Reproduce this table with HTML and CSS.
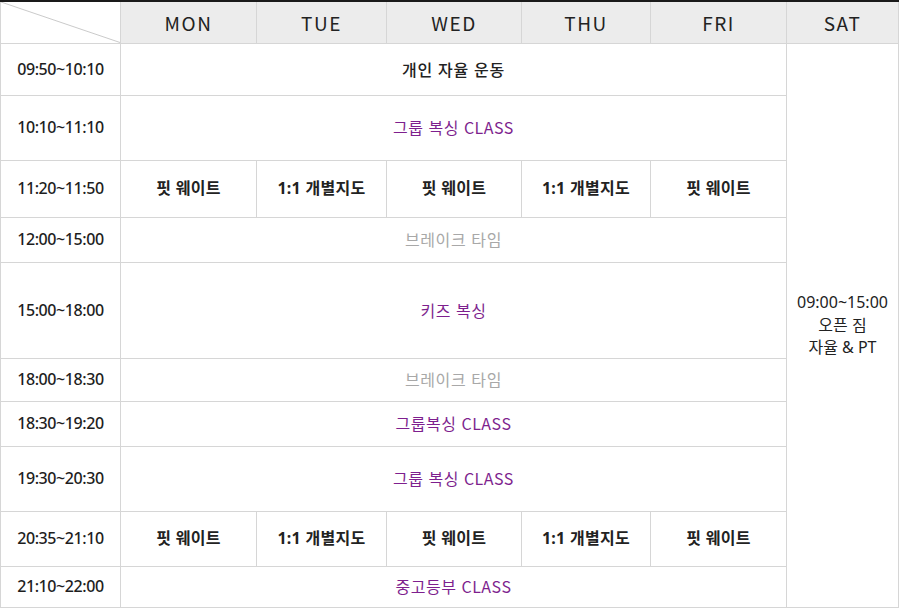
FILE: index.html
```html
<!DOCTYPE html>
<html lang="ko">
<head>
<meta charset="utf-8">
<link rel="stylesheet" href="styles.css">
</head>
<body>
<table class="schedule">
  <colgroup>
    <col class="c-time">
    <col class="c-mon">
    <col class="c-tue">
    <col class="c-wed">
    <col class="c-thu">
    <col class="c-fri">
    <col class="c-sat">
  </colgroup>
  <thead>
    <tr class="r-head">
      <th class="corner">
        <svg class="diag" viewBox="0 0 120 43" preserveAspectRatio="none"><line x1="0" y1="0" x2="120" y2="43" stroke="#c8c8c8" stroke-width="1"/></svg>
      </th>
      <th>MON</th>
      <th>TUE</th>
      <th>WED</th>
      <th>THU</th>
      <th>FRI</th>
      <th>SAT</th>
    </tr>
  </thead>
  <tbody>
    <tr class="r1">
      <td class="time">09:50~10:10</td>
      <td colspan="5" class="plain">개인 자율 운동</td>
      <td rowspan="10" class="sat">09:00~15:00<br>오픈 짐<br>자율 &amp; PT</td>
    </tr>
    <tr class="r2">
      <td class="time">10:10~11:10</td>
      <td colspan="5" class="purple">그룹 복싱 CLASS</td>
    </tr>
    <tr class="r3">
      <td class="time">11:20~11:50</td>
      <td class="bold">핏 웨이트</td>
      <td class="bold">1:1 개별지도</td>
      <td class="bold">핏 웨이트</td>
      <td class="bold">1:1 개별지도</td>
      <td class="bold">핏 웨이트</td>
    </tr>
    <tr class="r4">
      <td class="time">12:00~15:00</td>
      <td colspan="5" class="grey">브레이크 타임</td>
    </tr>
    <tr class="r5">
      <td class="time">15:00~18:00</td>
      <td colspan="5" class="purple">키즈 복싱</td>
    </tr>
    <tr class="r6">
      <td class="time">18:00~18:30</td>
      <td colspan="5" class="grey">브레이크 타임</td>
    </tr>
    <tr class="r7">
      <td class="time">18:30~19:20</td>
      <td colspan="5" class="purple">그룹복싱 CLASS</td>
    </tr>
    <tr class="r8">
      <td class="time">19:30~20:30</td>
      <td colspan="5" class="purple">그룹 복싱 CLASS</td>
    </tr>
    <tr class="r9">
      <td class="time">20:35~21:10</td>
      <td class="bold">핏 웨이트</td>
      <td class="bold">1:1 개별지도</td>
      <td class="bold">핏 웨이트</td>
      <td class="bold">1:1 개별지도</td>
      <td class="bold">핏 웨이트</td>
    </tr>
    <tr class="r10">
      <td class="time">21:10~22:00</td>
      <td colspan="5" class="purple">중고등부 CLASS</td>
    </tr>
  </tbody>
</table>
</body>
</html>
```

FILE: styles.css
```css
html, body {
  margin: 0;
  padding: 0;
  background: #ffffff;
}

body {
  font-family: "Noto Sans CJK KR", "Noto Sans", sans-serif;
  color: #222222;
}

.schedule {
  border-collapse: collapse;
  table-layout: fixed;
  width: 899px;
  border-top: 2px solid #1a1a1a;
}

.c-time { width: 120px; }
.c-mon { width: 136px; }
.c-tue { width: 130px; }
.c-wed { width: 135px; }
.c-thu { width: 129px; }
.c-fri { width: 136px; }
.c-sat { width: 112px; }

.schedule th,
.schedule td {
  border: 1px solid #d6d6d6;
  padding: 0;
  text-align: center;
  vertical-align: middle;
}

.schedule th {
  background: #ececec;
  font-size: 19px;
  font-weight: 400;
  letter-spacing: 1.5px;
  color: #222222;
}

.schedule th.corner {
  background: #ffffff;
  position: relative;
}

.diag {
  position: absolute;
  left: 0;
  top: 0;
  width: 100%;
  height: 100%;
  display: block;
}

.r-head { height: 42px; }
.r1 { height: 52px; }
.r2 { height: 65px; }
.r3 { height: 57px; }
.r4 { height: 45px; }
.r5 { height: 96px; }
.r6 { height: 43px; }
.r7 { height: 45px; }
.r8 { height: 65px; }
.r9 { height: 55px; }
.r10 { height: 41px; }

.schedule td {
  font-size: 16px;
  line-height: 1.4;
}

.time {
  font-family: "Noto Sans", "Noto Sans CJK KR", sans-serif;
  font-size: 16px;
  font-weight: 500;
  letter-spacing: -0.4px;
  color: #1e1e1e;
}

.plain {
  font-weight: 500;
  letter-spacing: 0.7px;
  color: #222222;
}

.bold {
  font-family: "Noto Sans", "Noto Sans CJK KR", sans-serif;
  font-weight: 700;
  letter-spacing: 0.3px;
  color: #222222;
}

.purple {
  color: #7e1f8e;
  letter-spacing: 0.5px;
}

.grey {
  color: #a8a8a8;
  letter-spacing: 0.6px;
}

.sat {
  font-family: "Noto Sans", "Noto Sans CJK KR", sans-serif;
  line-height: 1.5;
  color: #222222;
  letter-spacing: 0px;
}
```
